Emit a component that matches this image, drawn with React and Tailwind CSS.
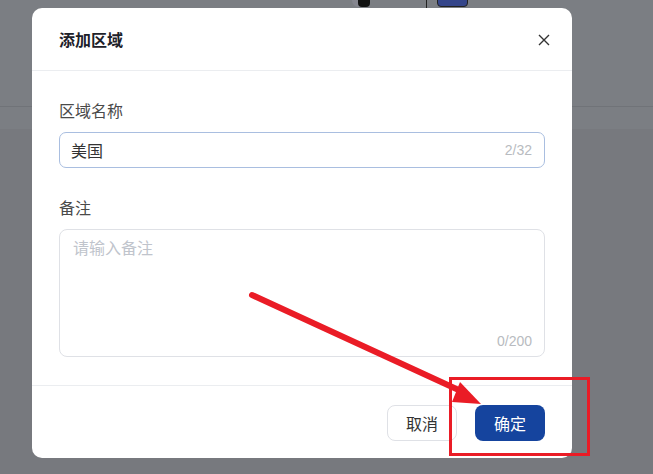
import React from "react";

const font = { fontFamily: '"Noto Sans CJK SC", "Liberation Sans", sans-serif' };

// 弹窗: 添加区域
const AddAreaDialog = () => {
  return (
    <div className="absolute left-[32px] top-[8px] w-[540px] h-[450px] bg-white rounded-[10px] flex flex-col">
      <div className="h-[63px] flex items-center justify-between pl-[27px] pr-[22px] border-b border-[#ebedf0]">
        <div className="text-[16px] font-bold text-[#1d2129]">添加区域</div>
        <svg width="12" height="12" viewBox="0 0 12 12" className="mt-[2px]">
          <path d="M1 1 L11 11 M11 1 L1 11" stroke="#333" strokeWidth="1.4" />
        </svg>
      </div>

      <div className="flex-1 px-[27px] pt-[28px] border-b border-[#ebedf0]">
        <div className="text-[16px] leading-[22px] text-[#4a4a4a]">区域名称</div>
        <div className="mt-[11px] h-[36px] border border-[#a9bee0] rounded-[7px] flex items-center justify-between pl-[11px] pr-[12px]">
          <span className="text-[16px] text-[#333]">美国</span>
          <span className="text-[14px] text-[#b8bbc0]" style={{ fontFamily: '"Liberation Sans", sans-serif' }}>2/32</span>
        </div>

        <div className="mt-[28px] text-[16px] leading-[22px] text-[#4a4a4a]">备注</div>
        <div className="mt-[11px] h-[128px] border border-[#dfe1e6] rounded-[8px] flex flex-col justify-between pl-[13px] pr-[12px] pt-[6px] pb-[4px]">
          <span className="text-[16px] leading-[22px] text-[#c0c4cc]">请输入备注</span>
          <span className="self-end text-[14px] text-[#b8bbc0]" style={{ fontFamily: '"Liberation Sans", sans-serif' }}>0/200</span>
        </div>
      </div>

      <div className="h-[72px] flex items-start justify-end gap-[18px] pt-[19px] pr-[27px]">
        <button className="w-[70px] h-[36px] rounded-[8px] border border-[#dfe1e6] bg-white text-[16px] text-[#333]">取消</button>
        <button className="w-[70px] h-[36px] rounded-[8px] bg-[#15449e] text-[16px] text-white">确定</button>
      </div>
    </div>
  );
};

export default function App() {
  return (
    <div className="relative w-[653px] h-[474px] overflow-hidden bg-[#7a7d82]" style={font}>
      {/* fondo de la página */}
      <div className="h-[107px] bg-[#7b7e83] border-b border-[#707378]" />
      <div className="h-[22px] bg-[#7b7e83]" />
      <div className="h-[345px] bg-[#77797e]" />

      {/* restos visibles arriba */}
      <div className="absolute left-[352px] top-[-6px] w-[18px] h-[13px] rounded-full bg-[#85868f]" />
      <div className="absolute left-[358px] top-[-6px] w-[12px] h-[13px] rounded-b-[4px] bg-[#111]" />
      <div className="absolute left-[426px] top-0 w-[1px] h-[8px] bg-[#222]" />
      <div className="absolute left-[437px] top-[-6px] w-[31px] h-[13px] rounded-[4px] bg-[#34458a] border border-[#222]" />

      <AddAreaDialog />

      {/* anotación roja */}
      <svg className="absolute left-0 top-0 pointer-events-none" width="653" height="474" viewBox="0 0 653 474">
        <line x1="252" y1="295" x2="463" y2="392" stroke="#ea1c26" strokeWidth="6" strokeLinecap="round" />
        <polygon points="460,382 481,404 452,402" fill="#ea1c26" />
        <rect x="450.5" y="378.5" width="138" height="76" fill="none" stroke="#ea1c26" strokeWidth="3" />
      </svg>
    </div>
  );
}
